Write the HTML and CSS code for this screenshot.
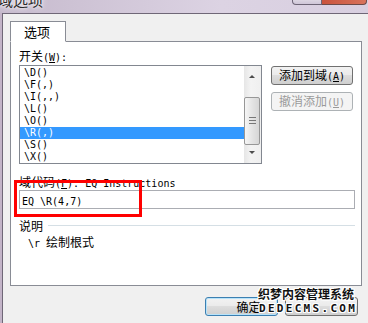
FILE: index.html
```html
<!DOCTYPE html>
<html>
<head lang="zh-CN">
    <meta charset="UTF-8">
    <title>域选项</title>
    <link rel="stylesheet" href="styles.css">
</head>
<body>

    <div class="frame">
        <!-- 标题栏 -->
        <div class="titlebar">
            <span class="title">域选项</span>
            <span class="tb-help"></span>
            <span class="tb-close"></span>
        </div>

        <div class="client">
            <div class="tabs">
                <div class="tab">选项</div>
            </div>

            <div class="panel">
                <div class="lbl">开关<span class="a">(<u>W</u>):</span></div>

                <div class="row">
                    <div class="listbox">
                        <ul class="items">
                            <li>\D()</li>
                            <li>\F(,)</li>
                            <li>\I(,,)</li>
                            <li>\L()</li>
                            <li>\O()</li>
                            <li class="current">\R(,)</li>
                            <li>\S()</li>
                            <li>\X()</li>
                        </ul>
                        <div class="scroll">
                            <span class="arrow up"></span>
                            <span class="thumb"><i></i></span>
                            <span class="arrow down"></span>
                        </div>
                    </div>
                    <div class="side">
                        <button class="btn">添加到域<span class="a">(<u>A</u>)</span></button>
                        <button class="btn" disabled>撤消添加<span class="a">(<u>U</u>)</span></button>
                    </div>
                </div>

                <div class="lbl code-lbl">域代码<span class="a">(<u>F</u>): EQ Instructions</span></div>
                <div class="input"><span class="a">EQ \R(4,7)</span></div>

                <div class="group">
                    <span>说明</span>
                    <i class="line"></i>
                </div>
                <div class="desc"><span class="a">\r </span>绘制根式</div>
            </div>

            <div class="footer">
                <button class="btn ok">确定</button>
                <!-- 取消按钮被水印盖住 -->
                <button class="btn"></button>
            </div>
        </div>

        <!-- 标注框和水印 -->
        <div class="redbox"></div>
        <div class="mark">
            <div class="mark-cn">织梦内容管理系统</div>
            <div class="mark-en">DEDECMS.COM</div>
        </div>
    </div>

</body>
</html>
```

FILE: styles.css
```css
* {
    padding: 0;
    margin: 0;
    list-style: none;
    box-sizing: border-box;
}
body {
    width: 368px;
    height: 323px;
    overflow: hidden;
    font-family: "Noto Sans CJK SC", sans-serif;
    font-size: 12px;
    color: #000;
}
.a {
    font-family: "DejaVu Sans Mono", "Liberation Mono", monospace;
    font-size: 10px;
}
.frame {
    position: relative;
    display: flex;
    flex-direction: column;
    height: 323px;
    background: linear-gradient(to right, #c3b4c8, #d9cfe0);
}

/* 标题栏 */
.titlebar {
    display: flex;
    height: 13px;
    background: linear-gradient(to right, #c6bacd, #dcd3e3 60%, #d8cfe0);
}
.title {
    margin: -9px 0 0 -2px;
    font-size: 15px;
    line-height: 18px;
    color: #2a2a2a;
    text-shadow: 0 0 6px #fff, 0 0 3px #fff;
}
.tb-help {
    width: 30px;
    height: 5px;
    margin-left: auto;
    border: 1px solid #6d6576;
    border-top: none;
    border-radius: 0 0 0 4px;
    background: linear-gradient(#dcd6e2, #cfc6d8);
}
.tb-close {
    width: 45px;
    height: 5px;
    margin-right: 1px;
    border: 1px solid #6d4a48;
    border-top: none;
    border-left: none;
    border-radius: 0 0 4px 0;
    background: linear-gradient(to right, #c9533c, #d8735c);
}

.client {
    flex: 1;
    margin-left: 2px;
    padding: 7px 6px 0 7px;
    border-left: 1px solid #6f6777;
    border-top: 1px solid #6f6777;
    background-color: #f0f0f0;
}

/* 选项卡 */
.tabs {
    display: flex;
}
.tab {
    position: relative;
    width: 56px;
    height: 21px;
    margin-bottom: -1px;
    padding-left: 13px;
    border: 1px solid #898c95;
    border-bottom: 1px solid #fff;
    background-color: #fff;
    line-height: 19px;
    font-size: 13px;
}
.panel {
    height: 245px;
    padding: 6px 0 0 8px;
    border: 1px solid #898c95;
    background-color: #fff;
}
.lbl {
    height: 17px;
    line-height: 16px;
}

/* 列表框 */
.row {
    display: flex;
    align-items: flex-start;
}
.listbox {
    display: flex;
    width: 243px;
    height: 99px;
    border: 1px solid #828790;
}
.items {
    flex: 1;
    padding-top: 1px;
    font-family: "DejaVu Sans Mono", "Liberation Mono", monospace;
    font-size: 10px;
}
.items li {
    height: 12px;
    line-height: 12px;
    padding-left: 4px;
}
.items .current {
    background-color: #3399ff;
    color: #fff;
}
.scroll {
    position: relative;
    width: 17px;
    background: linear-gradient(to right, #e6e6e6, #f3f3f3 40%, #efefef);
}
.arrow {
    position: absolute;
    left: 5px;
    width: 0;
    height: 0;
    border-left: 3px solid transparent;
    border-right: 3px solid transparent;
}
.arrow.up {
    top: 9px;
    border-bottom: 3px solid #4d4d4d;
}
.arrow.down {
    bottom: 9px;
    border-top: 3px solid #4d4d4d;
}
.thumb {
    position: absolute;
    left: 0;
    top: 31px;
    width: 16px;
    height: 48px;
    border: 1px solid #979797;
    border-radius: 2px;
    background: linear-gradient(to right, #f6f6f6, #e4e4e4 50%, #d6d6d6);
}
.thumb i {
    position: absolute;
    left: 4px;
    top: 19px;
    width: 7px;
    height: 7px;
    border-top: 1px solid #777;
    border-bottom: 1px solid #777;
}
.thumb i:after {
    content: "";
    position: absolute;
    left: 0;
    top: 2px;
    width: 7px;
    border-top: 1px solid #777;
}

/* 按钮 */
.side {
    display: flex;
    flex-direction: column;
    gap: 7px;
    margin: 1px 0 0 9px;
}
.btn {
    width: 82px;
    height: 19px;
    border: 1px solid #707070;
    border-radius: 3px;
    background: linear-gradient(#f2f2f2, #ebebeb 45%, #dddddd 50%, #cfcfcf);
    font-family: "Noto Sans CJK SC", sans-serif;
    font-size: 12px;
    line-height: 16px;
    color: #000;
}
.btn:disabled {
    border-color: #adb2b5;
    background: #f4f4f4;
    color: #9a9a9a;
}

.code-lbl {
    margin-top: 10px;
    height: 16px;
}
.input {
    width: 336px;
    height: 19px;
    padding-left: 2px;
    border: 1px solid #abadb3;
    line-height: 17px;
}
.group {
    display: flex;
    align-items: center;
    height: 16px;
    margin-top: 8px;
}
.group .line {
    flex: 1;
    margin: 0 6px 0 5px;
    border-top: 1px solid #d5dfe5;
}
.desc {
    height: 16px;
    margin-top: 1px;
    padding-left: 9px;
    line-height: 16px;
}

/* 底部按钮 */
.footer {
    display: flex;
    justify-content: flex-end;
    gap: 7px;
    margin-top: 11px;
    padding-right: 4px;
}
.footer .btn {
    width: 73px;
    height: 19px;
}
.footer .ok {
    border-color: #3c7fb1;
    box-shadow: inset 0 0 0 1px #b7e3fa;
    padding-left: 14px;
}

/* 红色标注框 */
.redbox {
    position: absolute;
    left: 14px;
    top: 180px;
    width: 128px;
    height: 37px;
    border: 3px solid #ff0000;
}

/* 水印 */
.mark {
    position: absolute;
    left: 258px;
    top: 286px;
    font-weight: bold;
    color: #111;
    text-shadow: 1px 0 0 #fff, -1px 0 0 #fff, 0 1px 0 #fff, 0 -1px 0 #fff,
                 1px 1px 0 #fff, -1px -1px 0 #fff, 1px -1px 0 #fff, -1px 1px 0 #fff;
}
.mark-cn {
    font-size: 12px;
    line-height: 15px;
}
.mark-en {
    margin-top: 1px;
    font-family: "DejaVu Sans Mono", monospace;
    font-size: 11px;
    line-height: 13px;
    letter-spacing: 2.3px;
    padding-left: 1px;
}
```
